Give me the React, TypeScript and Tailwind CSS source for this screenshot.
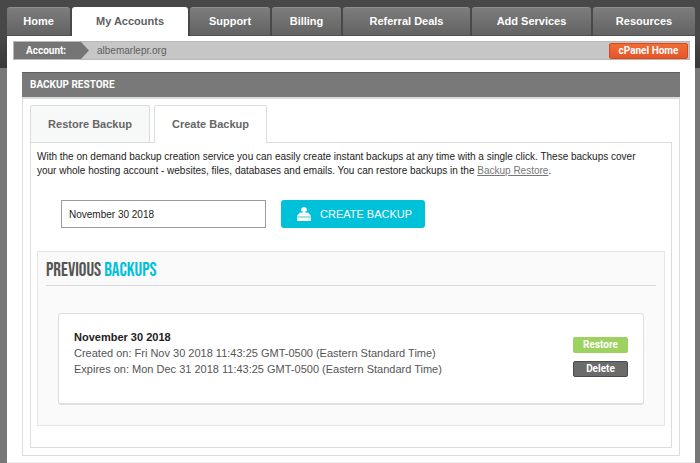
import { clsx } from 'clsx';
import { useState } from 'react';

interface NavItem {
  label: string;
  size: string;
}

interface Backup {
  title: string;
  created: string;
  expires: string;
}

const navItems: NavItem[] = [
  { label: 'Home', size: 'flex-[63]' },
  { label: 'My Accounts', size: 'flex-[116]' },
  { label: 'Support', size: 'flex-[80]' },
  { label: 'Billing', size: 'flex-[69]' },
  { label: 'Referral Deals', size: 'flex-[127]' },
  { label: 'Add Services', size: 'flex-[119]' },
  { label: 'Resources', size: 'flex-[102]' },
];

const backups: Backup[] = [
  {
    title: 'November 30 2018',
    created: 'Fri Nov 30 2018 11:43:25 GMT-0500 (Eastern Standard Time)',
    expires: 'Mon Dec 31 2018 11:43:25 GMT-0500 (Eastern Standard Time)',
  },
];

function DriveIcon() {
  return (
    <svg width="16" height="14" viewBox="0 0 16 14" aria-hidden="true">
      <path d="M7 0h2l2 2v2H9.500v1.500h2.500L15 9H1l3-3.500h2.500V4H5V2z" fill="#fff" />
      <path d="M1 9h14v2H1z" fill="#a5ddf3" />
      <path d="M1 11h14v3H1z" fill="#fff" />
      <path d="M12 12h1v1h-1z" fill="#a5ddf3" />
    </svg>
  );
}

function MainNav() {
  return (
    <nav className="flex gap-[2px] pt-[7px]">
      {navItems.map(({ label, size }) => (
        <a
          key={label}
          href="#"
          className={clsx(
            'flex h-[29px] items-center justify-center rounded-t-[3px] text-[11px] font-bold whitespace-nowrap',
            size,
            label === 'My Accounts'
              ? 'bg-white text-[#5f5f5f]'
              : 'border-t border-b border-t-[#8d8d8d] border-b-[#505050] bg-linear-to-b from-[#7c7c7c] to-[#636363] text-white',
          )}
        >
          {label}
        </a>
      ))}
    </nav>
  );
}

function AccountBar() {
  return (
    <div className="flex h-[19px] items-center justify-between border border-[#b8b8b8] bg-[#c6c6c6] pr-px">
      <div className="flex h-full items-center gap-2">
        <span className="flex h-[17px] w-[75px] items-center bg-[#757575] pl-3 font-['Roboto',sans-serif] text-[10px] font-bold text-white [clip-path:polygon(0_0,calc(100%_-_8px)_0,100%_50%,calc(100%_-_8px)_100%,0_100%)]">
          Account:
        </span>
        <span className="text-[10px] text-[#606060]">albemarlepr.org</span>
      </div>
      <button
        type="button"
        className="h-4 w-[79px] rounded-[2px] border border-[#d9481c] bg-linear-to-b from-[#f26c35] to-[#e4562a] font-['Roboto',sans-serif] text-[10px] leading-[14px] font-bold text-white"
      >
        cPanel Home
      </button>
    </div>
  );
}

function BackupCard({ title, created, expires }: Backup) {
  return (
    <article className="flex items-start justify-between rounded-[3px] border border-b-2 border-[#dfdfdf] bg-white px-[15px] pt-[15px] pb-[26px]">
      <div className="text-[11px] leading-4 text-[#555]">
        <h3 className="font-bold text-[#222]">{title}</h3>
        <p>Created on: {created}</p>
        <p>Expires on: {expires}</p>
      </div>
      <div className="flex flex-col gap-2 pt-2 font-['Roboto',sans-serif] text-[10px] font-bold text-white">
        <button type="button" className="h-4 w-[55px] rounded-[2px] bg-[#9dd160] leading-4">
          Restore
        </button>
        <button
          type="button"
          className="h-4 w-[55px] rounded-[2px] border border-[#4c4c4c] bg-[#6b6b6b] leading-[14px]"
        >
          Delete
        </button>
      </div>
    </article>
  );
}

export default function App() {
  const [backupName, setBackupName] = useState('November 30 2018');

  return (
    <div className="flex min-h-screen flex-col bg-[#777] bg-[linear-gradient(#484848,#484848_36px,#373737_68px,#777_68px)] pr-[5px] pl-[7px] font-['Liberation_Sans',Arial,sans-serif]">
      <MainNav />
      <div className="flex-1 border-b border-[#f0f0f0] bg-white pt-[5px] pr-[5px] pb-[6px] pl-[6px]">
        <AccountBar />

        <main className="mr-[10px] ml-[9px] mt-3">
          <h1 className="h-[25px] border-t border-[#5f5f5f] bg-[#797979] pl-2 font-['Roboto',sans-serif] text-[10px] leading-6 font-bold text-white">
            BACKUP RESTORE
          </h1>

          <div className="border border-t-2 border-[#dcdcdc] px-[7px] pt-[6px] pb-[7px]">
            <div role="tablist" className="flex items-end gap-1">
              <button
                type="button"
                role="tab"
                aria-selected="false"
                className="h-[37px] w-[120px] rounded-t-[2px] border border-b-0 border-[#dcdcdc] bg-[#f7f8f8] text-[11px] font-bold text-[#666]"
              >
                Restore Backup
              </button>
              <button
                type="button"
                role="tab"
                aria-selected="true"
                className="relative z-10 -mb-px h-[38px] w-[113px] rounded-t-[2px] border border-b-0 border-[#dcdcdc] bg-white text-[11px] font-bold text-[#666]"
              >
                Create Backup
              </button>
            </div>

            <div role="tabpanel" className="border border-[#dcdcdc] px-[6px] pt-[7px] pb-[21px]">
              <p className="pr-6 text-[10px] leading-[14px] text-[#222]">
                With the on demand backup creation service you can easily create instant backups at
                any time with a single click. These backups cover your whole hosting account -
                websites, files, databases and emails. You can restore backups in the{' '}
                <a href="#" className="text-[#777] underline">
                  Backup Restore
                </a>
                .
              </p>

              <form className="mt-[22px] flex gap-[15px] pl-6" onSubmit={(e) => e.preventDefault()}>
                <input
                  type="text"
                  aria-label="Backup name"
                  value={backupName}
                  onChange={(e) => setBackupName(e.target.value)}
                  className="h-7 w-[205px] border border-[#9b9b9b] bg-white px-[7px] text-[10px] text-[#222]"
                />
                <button
                  type="submit"
                  className="flex h-7 w-36 items-center gap-2 rounded-[3px] bg-[#00c1da] pl-[15px] text-[11px] text-white"
                >
                  <DriveIcon />
                  CREATE BACKUP
                </button>
              </form>

              <section className="mt-[23px] border border-[#e6e6e6] bg-[#fafafa] px-2 pt-[10px] pb-5">
                <h2 className="border-b border-[#d8d8d8] pb-[5px] font-['Bebas_Neue','Liberation_Sans_Narrow','Liberation_Sans',sans-serif] text-[19px] leading-[18px] font-normal text-[#555]">
                  PREVIOUS <span className="text-[#00c1da]">BACKUPS</span>
                </h2>
                <div className="mx-3 mt-[27px] flex flex-col gap-3">
                  {backups.map((backup) => (
                    <BackupCard key={backup.title} {...backup} />
                  ))}
                </div>
              </section>
            </div>
          </div>
        </main>
      </div>
    </div>
  );
}
